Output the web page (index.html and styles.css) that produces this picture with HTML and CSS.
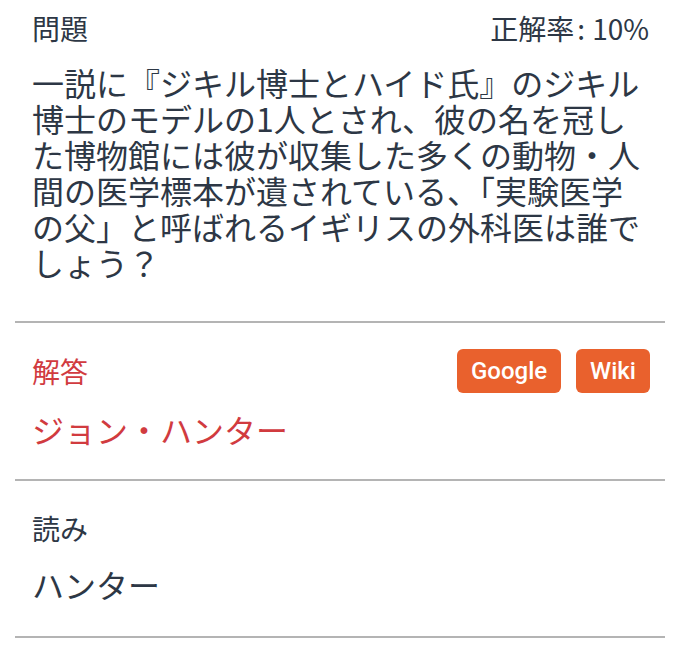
FILE: index.html
```html
<!DOCTYPE html>
<html lang="ja">
<head>
<meta charset="utf-8">
<link rel="stylesheet" href="styles.css">
</head>
<body>
<div class="card">
  <section class="sec sec-q">
    <div class="row">
      <div class="label">問題</div>
      <div class="rate">正解率<span class="colon">:</span>10%</div>
    </div>
    <p class="question">一説に『ジキル博士とハイド氏』のジキル博士のモデルの1人とされ、彼の名を冠した博物館には彼が収集した多くの動物・人間の医学標本が遺されている、「実験医学の父」と呼ばれるイギリスの外科医は誰でしょう？</p>
  </section>
  <section class="sec sec-a">
    <div class="row">
      <div class="label red">解答</div>
      <div class="btns">
        <span class="btn">Google</span>
        <span class="btn">Wiki</span>
      </div>
    </div>
    <div class="answer red">ジョン・ハンター</div>
  </section>
  <section class="sec sec-r">
    <div class="label">読み</div>
    <div class="answer">ハンター</div>
  </section>
</div>
</body>
</html>
```
FILE: styles.css
```css
html, body {
  margin: 0;
  padding: 0;
  background: #ffffff;
}
body {
  font-family: "Noto Sans CJK JP", "Noto Sans", sans-serif;
  color: #2d3745;
}
.card {
  padding: 0 15px;
}
.sec {
  border-bottom: 2px solid #b4b4b4;
  padding: 0 17px;
}
.sec-q {
  padding-top: 10px;
  padding-bottom: 41px;
}
.sec-a {
  padding-top: 26px;
  padding-bottom: 30px;
}
.sec-r {
  padding-top: 29px;
  padding-bottom: 32px;
}
.row {
  display: flex;
  justify-content: space-between;
  align-items: center;
}
.label {
  font-size: 28px;
  line-height: 36px;
}
.rate {
  font-size: 28px;
  line-height: 36px;
  font-family: "Noto Sans CJK JP", Roboto, sans-serif;
  margin-right: -1px;
}
.colon {
  display: inline-block;
  margin: 0 7px 0 3px;
}
.question {
  margin: 18px 0 0;
  font-size: 32px;
  line-height: 36px;
}
.red {
  color: #d13b3f;
}
.btns {
  display: flex;
  gap: 15px;
  margin-right: -2px;
}
.btn {
  display: flex;
  align-items: center;
  height: 44px;
  padding: 0 14px;
  background: #e9612d;
  color: #ffffff;
  border-radius: 6px;
  font-family: Roboto, "Noto Sans", sans-serif;
  font-weight: 500;
  font-size: 24px;
}
.sec-a .answer {
  margin-top: 16px;
}
.sec-r .answer {
  margin-top: 18px;
}
.answer {
  font-size: 32px;
  line-height: 40px;
}
```
